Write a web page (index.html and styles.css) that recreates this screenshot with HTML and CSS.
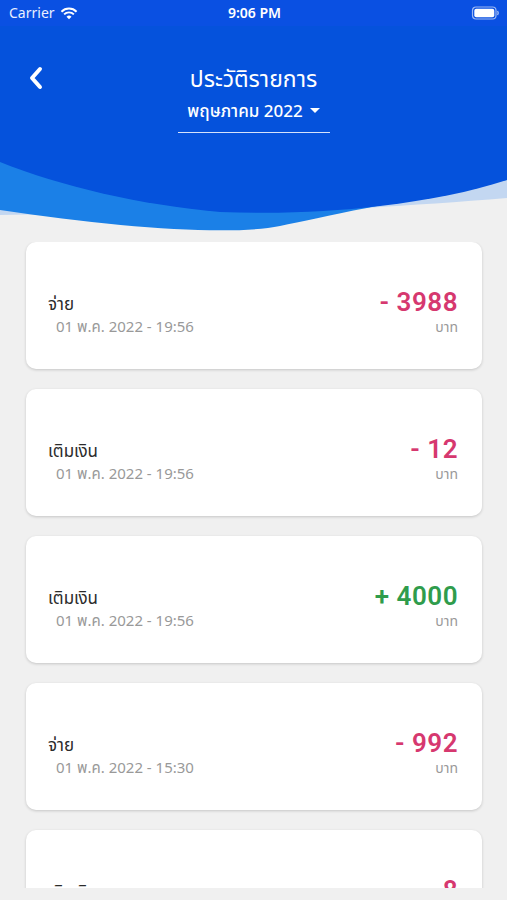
FILE: index.html
```html
<!DOCTYPE html>
<html lang="th">
<head>
    <meta charset="UTF-8">
    <meta name="viewport" content="width=device-width, initial-scale=1.0">
    <title>ประวัติรายการ</title>
    <link rel="stylesheet" href="styles.css">
</head>
<body>

<div id="app">
    <div class="header">
        <!-- wave background -->
        <svg class="header-bg" viewBox="0 0 507 236" preserveAspectRatio="none">
            <path fill="#c3d7f1" d="M0 0 H507 V198 C460 202 410 205 367 208 L0 215 Z"/>
            <path fill="#1b80e7" d="M0 0 H507 V180 L367 208 C330 215 300 222 280 226 C230 236 120 228 0 210 Z"/>
            <path fill="#0552dc" d="M0 0 H507 V180 C470 192 430 200 380 206 C330 212 280 214 220 212 C140 205 60 186 0 162 Z"/>
        </svg>

        <div class="status-bar">
            <div class="carrier">
                Carrier
                <svg class="wifi" viewBox="0 0 20 14">
                    <path d="M10 13.5 L7.2 10.6 A4 4 0 0 1 12.8 10.6 Z" fill="#fff"/>
                    <path d="M4.6 8 A7.6 7.6 0 0 1 15.4 8" stroke="#fff" stroke-width="2.2" fill="none"/>
                    <path d="M1.6 5 A11.8 11.8 0 0 1 18.4 5" stroke="#fff" stroke-width="2.2" fill="none"/>
                </svg>
            </div>
            <div class="clock">9:06 PM</div>
            <div class="battery">
                <svg viewBox="0 0 28 14">
                    <rect x="1" y="1" width="23.5" height="12" rx="3.5" fill="none" stroke="#9db8f2" stroke-width="1.2"/>
                    <rect x="2.8" y="2.8" width="20" height="8.4" rx="2" fill="#fff"/>
                    <path d="M26 5 Q27.5 7 26 9" stroke="#9db8f2" stroke-width="1.4" fill="none"/>
                </svg>
            </div>
        </div>

        <div class="nav">
            <svg class="back" viewBox="0 0 18 24">
                <path d="M13 3 L5 12 L13 21" stroke="#fff" stroke-width="4" fill="none" stroke-linecap="round" stroke-linejoin="round"/>
            </svg>
            <div class="title">ประวัติรายการ</div>
            <div class="month-picker">
                พฤษภาคม 2022
                <span class="caret"></span>
            </div>
        </div>
    </div>

    <div class="list">
        <div class="card">
            <div class="card-left">
                <div class="label">จ่าย</div>
                <div class="date">01 พ.ค. 2022 - 19:56</div>
            </div>
            <div class="card-right">
                <div class="amount minus">- 3988</div>
                <div class="unit">บาท</div>
            </div>
        </div>
        <div class="card">
            <div class="card-left">
                <div class="label">เติมเงิน</div>
                <div class="date">01 พ.ค. 2022 - 19:56</div>
            </div>
            <div class="card-right">
                <div class="amount minus">- 12</div>
                <div class="unit">บาท</div>
            </div>
        </div>
        <div class="card">
            <div class="card-left">
                <div class="label">เติมเงิน</div>
                <div class="date">01 พ.ค. 2022 - 19:56</div>
            </div>
            <div class="card-right">
                <div class="amount plus">+ 4000</div>
                <div class="unit">บาท</div>
            </div>
        </div>
        <div class="card">
            <div class="card-left">
                <div class="label">จ่าย</div>
                <div class="date">01 พ.ค. 2022 - 15:30</div>
            </div>
            <div class="card-right">
                <div class="amount minus">- 992</div>
                <div class="unit">บาท</div>
            </div>
        </div>
        <div class="card">
            <div class="card-left">
                <div class="label">เติมเงิน</div>
                <div class="date">01 พ.ค. 2022 - 15:30</div>
            </div>
            <div class="card-right">
                <div class="amount minus">- 8</div>
                <div class="unit">บาท</div>
            </div>
        </div>
    </div>
</div>

</body>
</html>
```

FILE: styles.css
```css
body {
    margin: 0;
    background-color: #f0f0f0;
    font-family: "Noto Sans Thai", "Noto Sans", Roboto, "DejaVu Sans", sans-serif;
    color: #333;
}

#app {
    width: 507px;
    height: 900px;
    overflow: hidden;
}

.header {
    position: relative;
    height: 232px;
}

.header-bg {
    position: absolute;
    left: 0;
    top: 0;
    width: 507px;
    height: 236px;
    z-index: 0;
}

.status-bar {
    position: relative;
    height: 26px;
    background-color: #0a50e2;
    display: flex;
    align-items: center;
    justify-content: space-between;
    padding: 0 7px 0 9px;
    color: #fff;
    font-size: 14px;
}

.carrier {
    display: flex;
    align-items: center;
    gap: 5px;
    width: 100px;
    color: #e9efff;
}

.wifi {
    width: 18px;
    height: 13px;
}

.clock {
    font-weight: 600;
}

.battery {
    width: 100px;
    display: flex;
    justify-content: flex-end;
}

.battery svg {
    width: 29px;
    height: 14px;
}

.nav {
    position: relative;
    display: flex;
    flex-direction: column;
    align-items: center;
    padding-top: 38px;
    color: #fff;
}

.back {
    position: absolute;
    left: 27px;
    top: 40px;
    width: 18px;
    height: 24px;
}

.title {
    font-size: 23px;
    line-height: 32px;
}

.month-picker {
    margin-top: 4px;
    display: flex;
    align-items: center;
    gap: 7px;
    width: 152px;
    justify-content: center;
    font-size: 17px;
    font-weight: 500;
    line-height: 24px;
    padding-bottom: 8px;
    border-bottom: 1px solid #d6e2fb;
}

.caret {
    width: 0;
    height: 0;
    border-left: 5px solid transparent;
    border-right: 5px solid transparent;
    border-top: 5px solid #fff;
    margin-bottom: 3px;
}

.list {
    margin-top: 10px;
    height: 646px;
    overflow: hidden;
    padding: 0 25px 0 26px;
    display: flex;
    flex-direction: column;
    gap: 20px;
}

.card {
    flex-shrink: 0;
    height: 127px;
    background-color: #fff;
    border-radius: 10px;
    box-shadow: 0 1px 3px rgba(0, 0, 0, 0.18);
    display: flex;
    align-items: center;
    justify-content: space-between;
    padding: 20px 24px 0 22px;
    box-sizing: border-box;
}

.label {
    font-size: 17px;
    line-height: 24px;
    color: #2b2b2b;
}

.date {
    margin-left: 8px;
    font-size: 15px;
    line-height: 21px;
    color: #999;
}

.card-right {
    text-align: right;
    margin-bottom: 8px;
}

.amount {
    font-size: 26px;
    line-height: 30px;
    font-weight: 600;
    letter-spacing: 0.5px;
    font-family: Roboto, "Noto Sans", sans-serif;
}

.amount.minus {
    color: #d6386f;
}

.amount.plus {
    color: #2f9c4c;
}

.unit {
    font-size: 14px;
    line-height: 18px;
    color: #999;
    margin-top: 2px;
}
```
